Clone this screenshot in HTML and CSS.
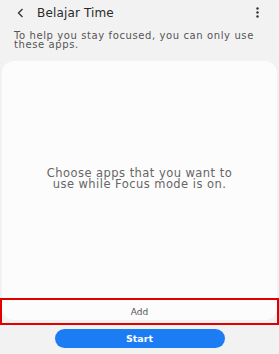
FILE: index.html
```html
<!DOCTYPE html>
<html>
<head>
<meta charset="utf-8">
<link rel="stylesheet" href="styles.css">
</head>
<body>
<div class="screen">
  <header class="topbar">
    <span class="back">
      <svg width="7" height="10" viewBox="0 0 7 10"><path d="M5.5 1 L1.5 5 L5.5 9" fill="none" stroke="#333" stroke-width="1.3"/></svg>
    </span>
    <h1 class="title">Belajar Time</h1>
    <span class="menu">
      <svg width="3" height="11" viewBox="0 0 3 11"><circle cx="1.5" cy="1.5" r="1.2" fill="#333"/><circle cx="1.5" cy="5.5" r="1.2" fill="#333"/><circle cx="1.5" cy="9.5" r="1.2" fill="#333"/></svg>
    </span>
  </header>
  <p class="subtitle">To help you stay focused, you can only use these apps.</p>
  <div class="card-wrap">
    <section class="card">
      <p class="empty">Choose apps that you want to use while Focus mode is on.</p>
    </section>
    <div class="add-box"><span class="add">Add</span></div>
  </div>
  <div class="actions">
    <button class="start">Start</button>
  </div>
</div>
</body>
</html>
```
FILE: styles.css
```css
* { box-sizing: border-box; }
html, body { margin: 0; padding: 0; }
body {
  width: 279px;
  height: 354px;
  background: #f2f2f2;
  font-family: "DejaVu Sans", Roboto, sans-serif;
  overflow: hidden;
}
.screen {
  display: flex;
  flex-direction: column;
  height: 354px;
}
.topbar {
  display: flex;
  align-items: center;
  height: 25px;
  padding: 0 0 0 17px;
}
.back { display: flex; width: 20px; }
.title {
  margin: 0;
  font-size: 12px;
  font-weight: 400;
  color: #2a2a2a;
  letter-spacing: 0.15px;
  flex: 1;
}
.menu { display: flex; width: 23px; }
.subtitle {
  margin: 7px 0 0 14px;
  width: 245px;
  height: 17px;
  font-size: 10px;
  line-height: 8.5px;
  letter-spacing: 0.6px;
  color: #555;
}
.card-wrap {
  position: relative;
  margin-top: 12px;
  height: 264px;
}
.card {
  margin: 0 2px;
  height: 259px;
  background: #fcfcfc;
  border-radius: 12px;
  display: flex;
  align-items: center;
  justify-content: center;
  padding-bottom: 24px;
}
.empty {
  margin: 0;
  width: 205px;
  text-align: center;
  font-size: 11.5px;
  line-height: 10.7px;
  letter-spacing: 0.45px;
  color: #666;
}
.add-box {
  position: absolute;
  left: 0;
  right: 0;
  top: 237px;
  height: 27px;
  border: 2px solid #e00000;
  display: flex;
  align-items: center;
  justify-content: center;
}
.add {
  font-size: 9px;
  color: #555;
}
.actions {
  display: flex;
  justify-content: center;
  margin-top: 4px;
}
.start {
  width: 170px;
  height: 19px;
  border: 0;
  border-radius: 10px;
  background: #1b7cf4;
  color: #fff;
  font-family: "DejaVu Sans", Roboto, sans-serif;
  font-weight: 700;
  font-size: 9.5px;
  padding: 0;
}
```
